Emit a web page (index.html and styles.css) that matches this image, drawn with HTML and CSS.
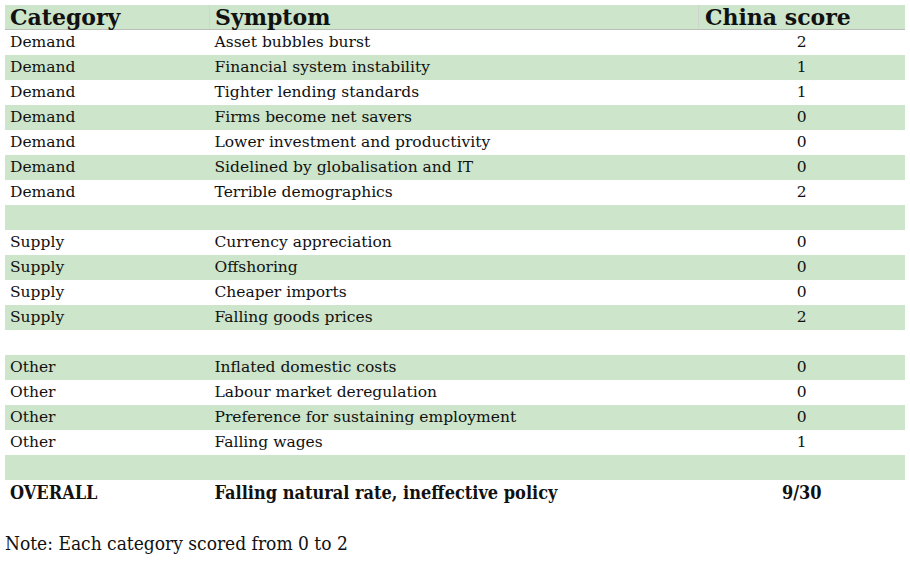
FILE: index.html
```html
<!DOCTYPE html>
<html>
<head>
<meta charset="utf-8">
<link rel="stylesheet" href="styles.css">
</head>
<body>
<div class="page">
<table class="scores">
<thead>
<tr><th class="c1">Category</th><th class="c2">Symptom</th><th class="c3">China score</th></tr>
</thead>
<tbody>
<tr><td>Demand</td><td>Asset bubbles burst</td><td class="n">2</td></tr>
<tr class="g"><td>Demand</td><td>Financial system instability</td><td class="n">1</td></tr>
<tr><td>Demand</td><td>Tighter lending standards</td><td class="n">1</td></tr>
<tr class="g"><td>Demand</td><td>Firms become net savers</td><td class="n">0</td></tr>
<tr><td>Demand</td><td>Lower investment and productivity</td><td class="n">0</td></tr>
<tr class="g"><td>Demand</td><td>Sidelined by globalisation and IT</td><td class="n">0</td></tr>
<tr><td>Demand</td><td>Terrible demographics</td><td class="n">2</td></tr>
<tr class="g"><td></td><td></td><td></td></tr>
<tr><td>Supply</td><td>Currency appreciation</td><td class="n">0</td></tr>
<tr class="g"><td>Supply</td><td>Offshoring</td><td class="n">0</td></tr>
<tr><td>Supply</td><td>Cheaper imports</td><td class="n">0</td></tr>
<tr class="g"><td>Supply</td><td>Falling goods prices</td><td class="n">2</td></tr>
<tr><td></td><td></td><td></td></tr>
<tr class="g"><td>Other</td><td>Inflated domestic costs</td><td class="n">0</td></tr>
<tr><td>Other</td><td>Labour market deregulation</td><td class="n">0</td></tr>
<tr class="g"><td>Other</td><td>Preference for sustaining employment</td><td class="n">0</td></tr>
<tr><td>Other</td><td>Falling wages</td><td class="n">1</td></tr>
<tr class="g"><td></td><td></td><td></td></tr>
<tr class="total"><td>OVERALL</td><td>Falling natural rate, ineffective policy</td><td class="n">9/30</td></tr>
</tbody>
</table>
<p class="note">Note: Each category scored from 0 to 2</p>
</div>
</body>
</html>
```
FILE: styles.css
```css
html, body {
  margin: 0;
  padding: 0;
  background: #ffffff;
}
.page {
  padding: 5px 0 0 5px;
  width: 900px;
}
.scores {
  border-collapse: collapse;
  width: 900px;
  table-layout: fixed;
  font-family: "DejaVu Serif", "Liberation Serif", serif;
  color: #111;
}
.scores th {
  background: #cde5cb;
  font-size: 22px;
  font-weight: bold;
  text-align: left;
  height: 24px;
  padding: 0 0 0 5px;
  line-height: 24px;
  border-bottom: 1px solid #b9bfb8;
  white-space: nowrap;
}
.scores th.c1 { width: 199px; border-right: 1px solid #cfd4ce; }
.scores th.c2 { width: 483px; border-right: 1px solid #cfd4ce; }
.scores th.c3 { padding-left: 6px; }
.scores td {
  height: 25px;
  padding: 0 0 0 5px;
  font-size: 15.5px;
  line-height: 25px;
  white-space: nowrap;
}
.scores td.n {
  text-align: center;
  padding: 0;
}
.scores tr.g td {
  background: #cde5cb;
}
.scores tr.total td {
  font-family: "DejaVu Serif", serif;
  font-stretch: condensed;
  font-weight: bold;
  font-size: 18px;
}
.note {
  margin: 27px 0 0 0;
  font-family: "DejaVu Serif", serif;
  font-stretch: condensed;
  font-size: 19px;
  color: #111;
}
```
